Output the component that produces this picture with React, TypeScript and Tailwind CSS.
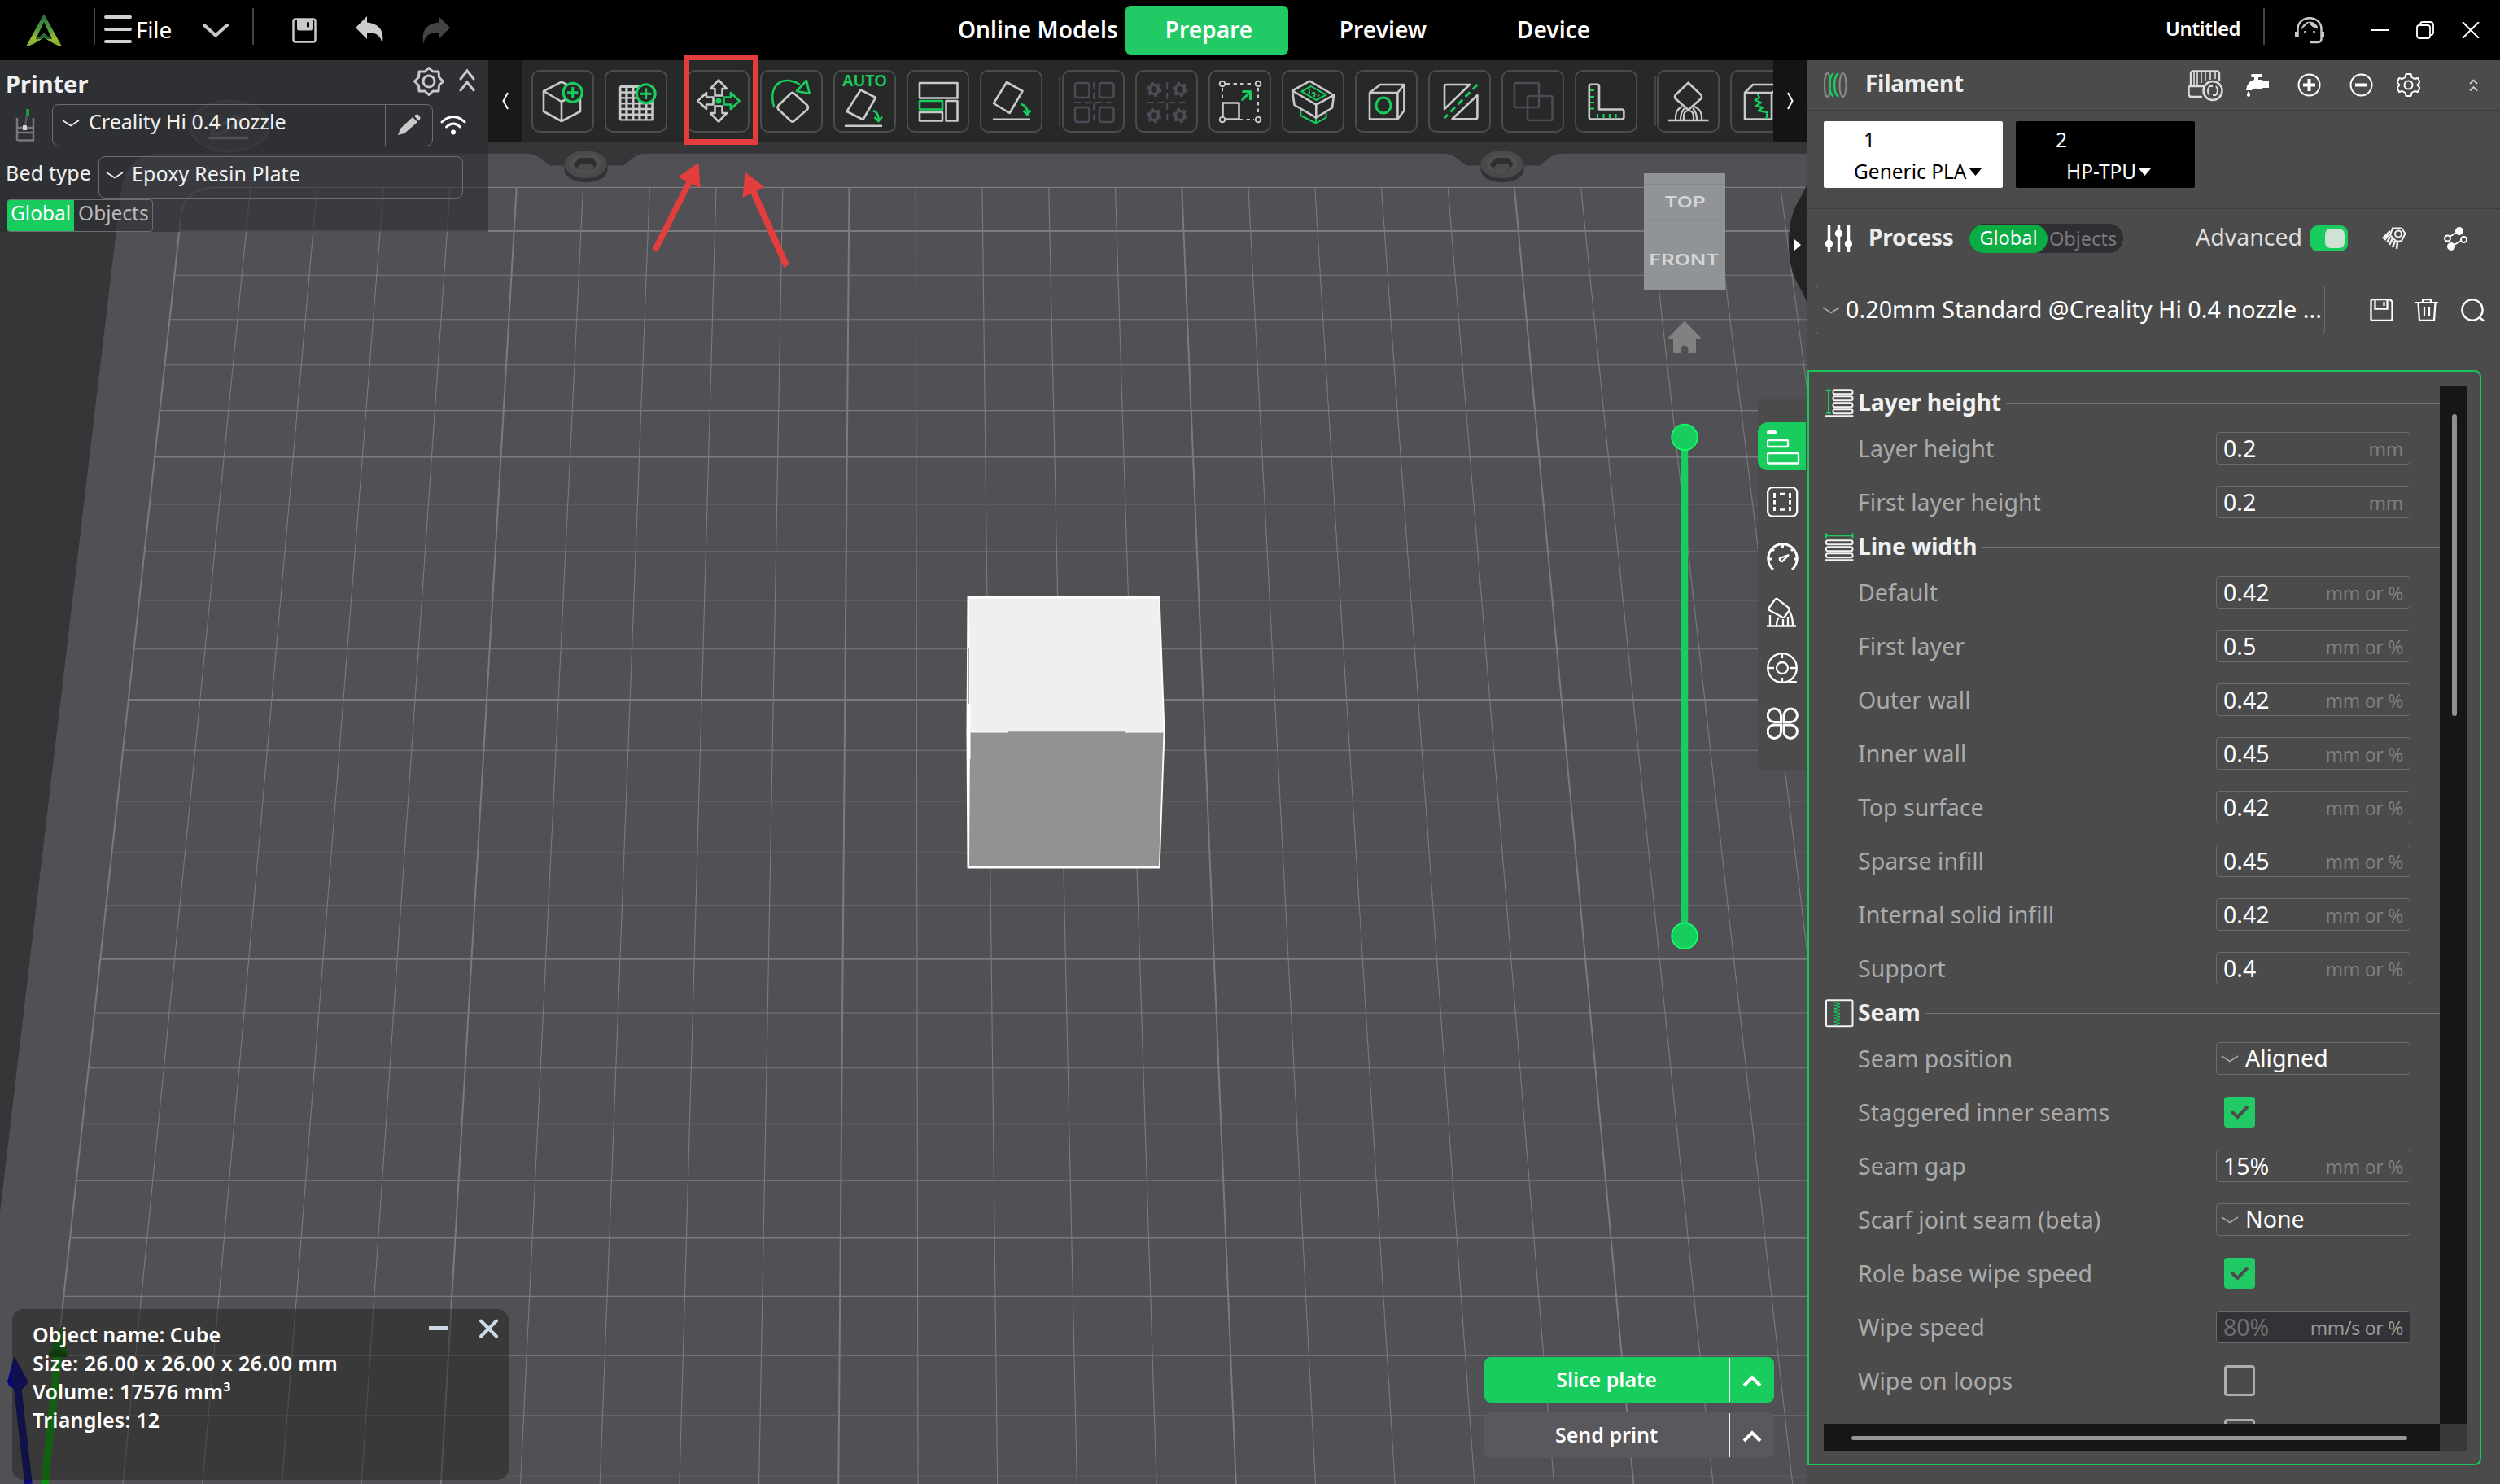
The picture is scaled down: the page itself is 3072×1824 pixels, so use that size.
import type { ReactNode } from "react";
import clsx from "clsx";

const GREEN = "#18cc5e";
const ICON = "#c9c9c9";
const DIM = "#4b4c55";

// perspective of the print bed: x of every grid column at the top and bottom edge
const BED_TOP = 230.3;
const BED_BOTTOM = 1824;
const ROWS = [
  284, 338.3, 392.8, 448.8, 504.6, 561.6, 619.6, 678, 737.6, 797.8, 860, 922.2, 984.8, 1048.3, 1113, 1178.7, 1245,
  1312.8, 1381.3, 1450.8, 1521.6, 1593.4, 1666.2, 1740.1, 1815.2,
];
const COLS = Array.from({ length: 31 }, (_, i) => i - 15);

const topX = (k: number) => 1452.2 + 81.74 * k;
const bottomX = (k: number) => 1518.8 + 97.7 * k;
const leftX = (y: number) =>
  topX(-15) + ((bottomX(-15) - topX(-15)) * (y - BED_TOP)) / (BED_BOTTOM - BED_TOP);

function Screw({ x }: { x: number }) {
  return (
    <g>
      <path d={`M${x - 73} 188 C${x - 60} 189 ${x - 56} 195 ${x - 43} 203.5 H${x + 46} C${x + 58} 195 ${x + 62} 189 ${x + 75} 188 Z`} fill="#363638" />
      <path d={`M${x - 26} 204 V209 A26 15 0 0 0 ${x + 27} 209 V204 Z`} fill="#333335" />
      <ellipse cx={x} cy="202" rx="26" ry="17" fill="#4a4a4d" />
      <ellipse cx={x} cy="201" rx="19" ry="12" fill="#505053" />
      <path d={`M${x - 15} 202 L${x - 7} 194 H${x + 9} L${x + 14} 202 L${x + 8} 210 H${x - 8} Z`} fill="#2f2f31" />
      <path d={`M${x - 10} 206 L${x - 5} 201 H${x + 7} L${x + 11} 206 L${x + 7} 210 H${x - 8} Z`} fill="#4c4c4f" />
    </g>
  );
}

function Bed() {
  return (
    <svg className="absolute inset-0" width="2220" height="1750" viewBox="0 74 2220 1750">
      <rect x="0" y="74" width="2220" height="1750" fill="#363638" />
      <path d="M0 1490 L148 240 Q154 190 192 188.7 H2220 V1824 H0 Z" fill="#515055" />
      <ellipse cx="282" cy="155" rx="48" ry="31" fill="#404043" stroke="#4c4d50" strokeWidth="3" />
      <path d="M262 160 L290 142 L298 148 L272 164 L260 165 Z" fill="none" stroke="#5a5b5f" strokeWidth="3.500" strokeLinejoin="round" />
      <path d="M258 169.500 H304" stroke="#85868a" strokeWidth="3.500" strokeLinecap="round" />
      <Screw x={719.5} />
      <Screw x={1845.5} />
      <g stroke="#7b7a7f">
        <path d={`M222 268 Q224 231 266 ${BED_TOP} H2220`} fill="none" strokeWidth="1.3" />
        {ROWS.map((y, i) => (
          <line key={y} x1={leftX(y)} x2="2220" y1={y} y2={y} strokeWidth={i % 5 === 0 ? 2 : 1.1} />
        ))}
        {COLS.map((k) => (
          <line
            key={k}
            x1={k === -15 ? leftX(268) : topX(k)}
            y1={k === -15 ? 268 : BED_TOP}
            x2={bottomX(k)}
            y2={BED_BOTTOM}
            strokeWidth={k % 5 === 0 ? 2 : 1.1}
          />
        ))}
      </g>
      <path d="M1188.500 733 H1425.500 L1431.500 900 L1425.500 1067.500 H1188.500 L1187.500 900 Z" fill="#fff" />
      <path d="M1191 735.500 H1424 L1429.500 899.500 H1192 Z" fill="#efefef" />
      <path d="M1192 900.500 L1239 900.500 V899.300 H1382 V900.500 H1429.500 L1424 1065 H1191 Z" fill="#929292" />
      <path d="M1190.500 796 V865" stroke="#a3a3a3" strokeWidth="1" />
      <path d="M1191.500 866 V933" stroke="#fff" strokeWidth="2" />
      <path d="M35 1824 L21 1700" stroke="#0a0a72" strokeWidth="9.500" />
      <path d="M17.500 1667 L34.500 1698 Q31 1708 22 1708 Q10 1706 9 1698 Z" fill="#07077a" />
      <path d="M55 1824 L71.500 1664" stroke="#0a960a" strokeWidth="9.500" />
      <path d="M75.500 1629 L83 1665 Q71 1658 60 1665 Z" fill="#0a6f0a" />
      <path d="M60 1665 Q71 1652 83 1665 L82 1668 H61 Z" fill="#064f06" />
      <path d="M2220 227 C2214 246 2198 254 2198 300 C2198 342 2214 352 2220 371 Z" fill="#232324" />
      <path d="M2205 294 L2213 301 L2205 308 Z" fill="#fff" />
    </svg>
  );
}

function Annotation() {
  return (
    <svg className="absolute left-[780px] top-[-7px]" width="220" height="270" viewBox="780 67 220 270" fill="#e33d3d">
      <rect x="843.500" y="70.500" width="85" height="104" fill="none" stroke="#e33d3d" strokeWidth="7" />
      <path d="M858.500 200 L860.500 231 L850 226 L808 309.500 L801.500 306 L843.500 222.500 L833 217.500 Z" />
      <path d="M915.500 211.500 L939.500 230 L929.500 234 L970 325 L963 329 L922.500 238 L912.500 243 Z" />
    </svg>
  );
}

function Chevron({ className }: { className?: string }) {
  return (
    <svg className={className} width="22" height="9" viewBox="0 0 22 9" fill="none" stroke="currentColor" strokeWidth="1.7">
      <path d="M1 1 L11 7.500 L21 1" />
    </svg>
  );
}

function Divider({ className }: { className?: string }) {
  return <div className={clsx("w-[2px] h-[45px] mb-[9px] bg-[#444] shrink-0", className)} />;
}

function Header() {
  return (
    <header className="flex items-center h-[74px] bg-black pl-[32px] shrink-0 text-white *:shrink-0">
      <svg width="44" height="41" viewBox="0 0 44 41">
        <defs>
          <linearGradient id="logo" x1="0" y1="0" x2="0" y2="1">
            <stop offset="0" stopColor="#1d6b3c" />
            <stop offset="0.45" stopColor="#4e9b3e" />
            <stop offset="0.75" stopColor="#9cba35" />
            <stop offset="1" stopColor="#7cae36" />
          </linearGradient>
        </defs>
        <path d="M22 0 L44 40 Q36 39 22 29 Q8 39 0 40 Z M22 10 L12 31 Q17 29 22 24 Q27 29 32 31 Z" fill="url(#logo)" fillRule="evenodd" />
        <path d="M12 31 Q18 28 22 24 Q26 28 32 31 Q26 32 22 29 Q18 32 12 31" fill="#1f7038" />
      </svg>
      <Divider className="ml-[39px]" />
      <svg className="ml-[11px] mb-[2px]" width="34" height="36" viewBox="0 0 34 36" stroke="#d2d2d2" strokeWidth="4" strokeLinecap="round">
        <path d="M2 3 H32 M2 18 H32 M2 33 H32" />
      </svg>
      <div className="ml-[5px] w-[82px] pb-[2px] text-[28px] tracking-[-0.2px]">File</div>
      <svg width="32" height="17" viewBox="0 0 32 17" fill="none" stroke={ICON} strokeWidth="4" strokeLinecap="round" strokeLinejoin="round">
        <path d="M2 2 L16 14.500 L30 2" />
      </svg>
      <Divider className="ml-[29px]" />
      <svg className="ml-[47px]" width="30" height="31" viewBox="0 0 30 31">
        <rect x="1.500" y="1.500" width="27" height="28" rx="2.500" fill="none" stroke={ICON} strokeWidth="2.500" />
        <path d="M6 1 H25 V13 Q25 15.500 22.500 15.500 H8.500 Q6 15.500 6 13 Z" fill={ICON} />
        <rect x="18" y="5" width="3" height="6.500" rx="1" fill="#000" />
      </svg>
      <svg className="ml-[48px]" width="34" height="34" viewBox="0 0 34 34" fill="#cdcdcd">
        <path d="M14 0 V7.500 C29 9 36 18 32.500 34 C31 24 26 20 14 20 V28 L0 14 Z" />
      </svg>
      <svg className="ml-[48px]" width="34" height="34" viewBox="0 0 34 34" fill="#444">
        <path d="M20 0 V7.500 C5 9 -2 18 1.500 34 C3 24 8 20 20 20 V28 L34 14 Z" />
      </svg>
      <nav className="flex items-center ml-[624px] text-[28px] font-semibold tracking-[0.050px] *:pb-[2px]">
        <div className="w-[206px] whitespace-nowrap">Online Models</div>
        <div className="flex items-center justify-center w-[200px] h-[60px] pl-[5px] rounded-[6px] bg-[#22ca65]">Prepare</div>
        <div className="w-[233px] text-center">Preview</div>
        <div className="w-[186px] text-center">Device</div>
      </nav>
      <div className="ml-[659px] w-[120px] pb-[4px] text-[24px] font-semibold tracking-[-0.400px]">Untitled</div>
      <Divider />
      <svg className="ml-[37px]" width="36" height="33" viewBox="0 0 36 33" fill="none" stroke={ICON} strokeWidth="2.500">
        <path d="M3.500 24 V15 C3.500 -3.500 32.500 -3.500 32.500 15 V27 Q32.500 31 27 31 H18" />
        <path d="M1.500 18 V25 M34.500 18 V25" strokeWidth="3" />
        <path d="M8 15 Q10 7 18 6 Q19 12 28 14 Q26 6 18 6" fill={ICON} strokeWidth="1" />
        <path d="M12.500 17 V20 M23.500 17 V20" />
      </svg>
      <svg className="ml-[57px]" width="22" height="22" viewBox="0 0 22 22" stroke="#fff" strokeWidth="2"><path d="M0 11 H22" /></svg>
      <svg className="ml-[34px]" width="22" height="22" viewBox="0 0 22 22" fill="none" stroke="#fff" strokeWidth="1.800">
        <rect x="1" y="5" width="16" height="16" rx="3" />
        <path d="M5 5 V4 Q5 1 8 1 H17 Q21 1 21 5 V14 Q21 17 17 17" />
      </svg>
      <svg className="ml-[34px]" width="22" height="20" viewBox="0 0 22 20" stroke="#fff" strokeWidth="2"><path d="M1 0 L21 20 M21 0 L1 20" /></svg>
    </header>
  );
}

function PrinterPanel() {
  return (
    <section className="w-[600px] h-[211px] shrink-0 bg-[#2c2d32]/60 text-[#f0f0f0] text-[25px]">
      <div className="flex h-[52px] pl-[7px] pr-[16px]">
        <h2 className="pt-[9px] leading-[40px] text-[29px] font-bold">Printer</h2>
        <svg className="ml-auto mt-[8px]" width="38" height="36" viewBox="0 0 38 36" fill="none" stroke={ICON} strokeWidth="3" strokeLinejoin="round">
          <path d="M19 1.500 L24 6 L31 6 L31.500 13 L36.500 18 L31.500 23 L31 30 L24 30 L19 34.500 L14 30 L7 30 L6.500 23 L1.500 18 L6.500 13 L7 6 L14 6 Z" />
          <circle cx="19" cy="18" r="7" />
        </svg>
        <svg className="ml-[18px] mt-[10px]" width="20" height="30" viewBox="0 0 20 30" fill="none" stroke={ICON} strokeWidth="3" strokeLinecap="round">
          <path d="M2 13 L10 3 L18 13 M2 27 L10 17 L18 27" />
        </svg>
      </div>
      <div className="flex items-center h-[55px] pl-[19px]">
        <svg width="26" height="42" viewBox="0 0 26 42" fill="none" stroke="#77787c" strokeWidth="2.500">
          <path d="M2 12 V40 M22 12 V40 M2 24 H22 M3 30 H21 M3 39.500 H23" />
          <rect x="9" y="21" width="5" height="6" fill="#d5d5d5" stroke="none" />
          <path d="M14 9 L12 21" stroke="#555" />
          <rect x="13" y="1" width="4" height="9" fill="#1b9a34" stroke="none" />
        </svg>
        <div className="flex ml-[19px] w-[468px] h-[52px] border border-[#6c6d71] rounded-[8px]">
          <div className="flex items-center grow border-r border-[#6c6d71] pl-[11px] pb-[8px]">
            <Chevron className="mt-[4px]" />
            <span className="ml-[11px]">Creality Hi 0.4 nozzle</span>
          </div>
          <div className="flex items-center justify-center w-[57px]">
            <svg width="28" height="27" viewBox="0 0 28 27" fill={ICON}>
              <path d="M0 26 L3 18 L18 4 L24 10 L8 24 Z M20 2.500 Q23 -1 26 2 Q29 5 26 8 L25.500 8.500 Z" />
            </svg>
          </div>
        </div>
        <svg className="ml-[9px]" width="32" height="24" viewBox="0 0 32 24" fill="none" stroke="#fff" strokeWidth="3" strokeLinecap="round">
          <path d="M2 8 Q16 -5 30 8 M7.500 14 Q16 6 24.500 14" />
          <circle cx="16" cy="20.500" r="3" fill="#fff" stroke="none" />
        </svg>
      </div>
      <div className="flex items-center h-[64px] pl-[7px]">
        <span className="w-[114px] pb-[1px] tracking-[0.2px]">Bed type</span>
        <div className="flex items-center w-[448px] h-[52px] mt-[10px] border border-[#6c6d71] rounded-[8px] pl-[8px] pb-[8px]">
          <Chevron className="mt-[2px]" />
          <span className="ml-[10px] tracking-[0.1px]">Epoxy Resin Plate</span>
        </div>
      </div>
      <div className="flex w-[180px] h-[40px] ml-[8px] border border-[#6c6d71] rounded-[4px] overflow-hidden leading-[32px] text-[24.500px]">
        <span className="w-[82px] pl-[4px] bg-[#18cc5e] text-white">Global</span>
        <span className="pl-[5px] text-[#b9b9ba]">Objects</span>
      </div>
    </section>
  );
}

function PlusBadge({ cy }: { cy: number }) {
  return (
    <g stroke={GREEN} strokeWidth="3">
      <circle cx="50.700" cy={cy} r="11.500" fill="#272928" />
      <path d={`M44 ${cy} H57.400 M50.700 ${cy - 6.7} V${cy + 6.7}`} />
    </g>
  );
}

const Gear = ({ x, y }: { x: number; y: number }) => (
  <g>
    <circle cx={x} cy={y} r="5.500" strokeWidth="3.500" />
    <circle cx={x} cy={y} r="8" strokeWidth="2.500" strokeDasharray="4 4.370" />
  </g>
);

const moveArrow = "M39 12.500 L49 23 H43.500 V31.500 H34.500 V23 H29 Z";
const cross = "M39.200 15 V65 M15 40 H64";

const toolIcons: ReactNode[] = [
  <>
    <path d="M37 14.700 L60 26 V51 L37 63 L15 51 V26 Z M15 26 L37 39 L60 26 M37 39 V63" />
    <PlusBadge cy={27.7} />
  </>,
  <>
    <rect x="17.800" y="19" width="43" height="43.500" rx="2.500" fill={ICON} stroke="none" />
    {[0, 1, 2, 3, 4].map((c) =>
      [0, 1, 2, 3, 4, 5].map((r) => (
        <rect key={`${c}-${r}`} x={20.5 + c * 8} y={22 + r * 6.8} width="4.800" height="4.300" fill="#272928" stroke="none" />
      ))
    )}
    <PlusBadge cy={29.3} />
  </>,
  <>
    <path d={moveArrow} />
    <path d={moveArrow} transform="rotate(180 39 38)" />
    <path d={moveArrow} transform="rotate(270 39 38)" />
    <path d={moveArrow} transform="rotate(90 39 38)" stroke={GREEN} />
    <circle cx="39" cy="38" r="3.500" fill={GREEN} stroke="none" />
  </>,
  <>
    <path d="M37.500 29 Q39.700 26.500 42 29 L58 43.500 Q60 46 58 48.500 L42 62.500 Q39.700 65 37.500 62.500 L22.500 48.500 Q20.500 46 22.500 43.500 Z" />
    <path d="M17.300 46 C9 18 28 5 49 18 M57 13 L60.700 29 L45 26 Z" stroke={GREEN} />
  </>,
  <>
    <path d="M33.500 24.500 L52 34 L36.500 61 L16.500 51 Z" />
    <path d="M14 68.700 H60" />
    <path d="M49 50 Q56 53 55.500 61 M50.500 58 L55.500 63 L60 57.500" stroke={GREEN} />
  </>,
  <>
    <rect x="16" y="16" width="46.500" height="18.500" />
    <rect x="16" y="52" width="28" height="10.500" />
    <rect x="48.500" y="38" width="14" height="24.500" />
    <rect x="16" y="38" width="28" height="10.500" stroke={GREEN} />
  </>,
  <>
    <path d="M33 15 L52.500 26 L36.600 53 L17 41 Z" />
    <path d="M16 60.700 H62" />
    <path d="M51 42 Q59 45 58.500 53 M53.500 50 L58.500 55 L62.500 49.500" stroke={GREEN} />
  </>,
  <g stroke={DIM}>
    <rect x="16" y="16" width="17.500" height="18" rx="3" />
    <rect x="46" y="16" width="17.500" height="18" rx="3" />
    <rect x="16" y="46" width="17.500" height="18" rx="3" />
    <rect x="46" y="46" width="17.500" height="18" rx="3" />
    <path d={cross} strokeWidth="2" strokeDasharray="8 5" />
  </g>,
  <g stroke={DIM}>
    <Gear x={23} y={24} />
    <Gear x={55} y={24} />
    <Gear x={23} y={56} />
    <Gear x={55} y={56} />
    <path d={cross} strokeWidth="2" strokeDasharray="8 5" />
  </g>,
  <>
    <path d="M22 17 H56 M61 22 V56 M17 22 V38 M38 61 H56" strokeDasharray="4.500 4" strokeWidth="2" />
    <rect x="17.500" y="40.500" width="20" height="20" />
    {[[17, 17], [61, 17], [17, 61], [61, 61]].map(([x, y]) => (
      <circle key={`${x}-${y}`} cx={x} cy={y} r="3.300" fill="#272928" strokeWidth="2" />
    ))}
    <path d="M41 37.500 L51 27 M41.500 26.500 H51.500 V37" stroke={GREEN} strokeWidth="3" />
  </>,
  <>
    <path d="M23.300 49 V56 L42 65.500 L54.500 58.500 V52 M42 59 V65" stroke={GREEN} strokeWidth="2" />
    <path d="M34.400 13.700 L13 25.500 L42.300 42.700 L64 31 Z M13 25.500 L15.500 43 L42.300 58.700 L62 46.500 L64 31 M42.300 43 V58" />
    <path d="M36 20 L24.400 26.300 L42.300 37 L54.500 30.700 Z" stroke={GREEN} strokeWidth="2" />
    <path d="M33 27 L47 32 M34 24 V29 M40 27 V33" stroke={GREEN} strokeWidth="2" strokeDasharray="2 2" />
  </>,
  <>
    <path d="M18 28 H52.400 V60.500 H18 Z M18 28 L31 18 H60.400 L52.400 28 M60.400 18 V50 L52.400 60.500" />
    <ellipse cx="35" cy="43.500" rx="9" ry="9.500" stroke={GREEN} strokeWidth="3" />
  </>,
  <>
    <path d="M20 20 Q20 18 22 18 H51 L20 48 Z M60.400 31 V58 Q60.400 60.300 58 60.300 H29.600 Z" />
    <path d="M60.400 18 L20 59" stroke={GREEN} strokeDasharray="8 5" strokeWidth="3" />
  </>,
  <g stroke={DIM}>
    <rect x="16" y="16" width="30" height="30" rx="1.500" />
    <rect x="32" y="32" width="30.500" height="30" rx="1.500" />
  </g>,
  <>
    <path d="M17.800 20 Q17.800 17.800 20 17.800 H28 Q30 17.800 30 20 V48.500 H58 Q60.400 48.500 60.400 51 V58 Q60.400 60.500 58 60.500 H20 Q17.800 60.500 17.800 58 Z" />
    <path d="M19 25 H24 M19 33 H24 M19 40 H24 M19 47.500 H24 M28 54 V59 M35.500 54 V59 M43 54 V59 M50.500 54 V59" stroke={GREEN} strokeWidth="2.200" />
  </>,
  <>
    <path d="M38.600 15.700 L54.500 31 Q55.500 33 54.500 35 L38.600 49 L22.500 35 Q21.500 33 22.500 31 Z M14 62 H63.500" />
    <path d="M23 61 Q22 49 31 45 M55 61 Q56 49 46 45 M29 61 Q29 52 34 47 M49 61 Q49 52 44 47 M33 61 Q32 50 39 50 Q46 50 45 61" strokeWidth="2.200" />
  </>,
  <>
    <path d="M18 28 H51 V60.500 H18 Z M18 28 L28 18 H62 L52 28" />
    <path d="M34 30 L36 34 L30.500 37 L38 40 L32 44 L40 46 L35 50 L45.500 52 L44.500 60" stroke={GREEN} strokeWidth="2.300" />
  </>,
];

function ToolButton({ index }: { index: number }) {
  return (
    <div className="relative w-[77px] h-[77px] shrink-0 border-2 border-[#4a4c4b] rounded-[10px]">
      {index === 4 && (
        <span className="absolute inset-x-0 top-0 text-center leading-[22px] text-[20px] font-semibold text-[#18cc5e]">AUTO</span>
      )}
      <svg className="-m-[2px]" width="77" height="77" viewBox="0 0 77 77" fill="none" stroke={ICON} strokeWidth="2.600" strokeLinejoin="round">
        {toolIcons[index]}
      </svg>
    </div>
  );
}

function ToolGroup({ from, to }: { from: number; to: number }) {
  return (
    <div className="flex gap-[13px]">
      {toolIcons.slice(from, to).map((_, i) => (
        <ToolButton key={i} index={from + i} />
      ))}
    </div>
  );
}

function Toolbar() {
  return (
    <div className="flex items-center w-[1620px] h-[100px] bg-[#272928] overflow-hidden">
      <div className="flex items-center justify-center w-[42px] h-full shrink-0 bg-[#191919]">
        <svg width="8" height="22" viewBox="0 0 8 22" fill="none" stroke="#fff" strokeWidth="2"><path d="M7 1 L1.500 11 L7 21" /></svg>
      </div>
      <div className="flex items-center w-[1537px] pl-[11px] overflow-hidden">
        <ToolGroup from={0} to={2} />
        <div className="w-[24px] shrink-0" />
        <ToolGroup from={2} to={7} />
        <div className="w-[2px] h-[62px] ml-[20px] mr-[2px] shrink-0 bg-[#424443]" />
        <ToolGroup from={7} to={15} />
        <div className="w-[2px] h-[62px] ml-[21px] mr-[1px] shrink-0 bg-[#424443]" />
        <ToolGroup from={15} to={17} />
      </div>
      <div className="flex items-center justify-center w-[41px] h-full shrink-0 bg-[#141414]">
        <svg width="8" height="22" viewBox="0 0 8 22" fill="none" stroke="#fff" strokeWidth="2"><path d="M1 1 L6.500 11 L1 21" /></svg>
      </div>
    </div>
  );
}

function ViewCube() {
  return (
    <div className="absolute left-[2020px] top-[139px] flex flex-col w-[100px] h-[143px] bg-[#909497] text-[#d3d5d8] text-center font-[Inter] text-[19px] font-semibold *:shrink-0">
      <div className="h-[14px] border-b border-[#84888b]" />
      <div className="h-[43px] leading-[44px] border-b border-[#878b8e]"><span className="inline-block scale-x-[1.3]">TOP</span></div>
      <div className="leading-[99px]"><span className="inline-block scale-x-[1.32]">FRONT</span></div>
    </div>
  );
}

function HeightSlider() {
  return (
    <svg className="absolute left-[2048px] top-[318px]" width="44" height="780" viewBox="2048 392 44 780">
      <path d="M2070 394.500 L2090 415 V417 H2084 V434 H2074.500 V430 Q2074 424.500 2070 424.500 Q2066 424.500 2065.500 430 V434 H2056 V417 H2050 V415 Z" fill="#818182" />
      <path d="M2070 537 V1150" stroke={GREEN} strokeWidth="8.500" />
      <circle cx="2070" cy="537.500" r="15.800" fill={GREEN} stroke="#0cff68" strokeWidth="1.800" />
      <circle cx="2070" cy="1150.500" r="15.800" fill={GREEN} stroke="#0cff68" strokeWidth="1.800" />
    </svg>
  );
}

const categoryIcons: ReactNode[] = [
  <>
    <rect x="0" y="2" width="12" height="5" rx="2.500" fill="#fff" stroke="none" />
    <rect x="1" y="14" width="25" height="8" rx="1.500" />
    <rect x="1" y="30" width="38" height="12.500" rx="1.500" />
  </>,
  <>
    <rect x="1.200" y="4.200" width="36" height="35.500" rx="6" />
    <path d="M9.500 11 V33 M28.500 11 V33" strokeDasharray="6 2.500" strokeWidth="3" />
    <path d="M16 12 H22 M16 31.500 H22" />
  </>,
  <>
    <path d="M8 37 A17.700 17.700 0 1 1 31 37 M19.500 7 V11 M2 24 H6 M33 24 H37 M7 12 L9 14 M32 12 L30 14" strokeWidth="3" />
    <path d="M27 19 L16 23 Q15 27 19 27 Z" />
  </>,
  <>
    <path d="M2 17 L10 6 Q12 4 14 6 L27 16 Q29 18 27 20 L22 27 Q20 29 18 27 L3 19 Z" />
    <path d="M0 38.500 H36 M4 38 V25 M12 38 Q12 31 15 28 M20 38 V30 M26 38 V27 M32 38 Q32 27 28 21" />
  </>,
  <>
    <circle cx="19" cy="22" r="17.800" />
    <circle cx="19" cy="22" r="7" />
    <path d="M19 4 V10 M19 34 V39 M1 22 H9 M29 22 H37 M27 39 L37 39.500" />
  </>,
  <>
    <path d="M17.500 20.500 V12 A8.200 8.200 0 1 0 9 20.500 Z M21 20.500 V12 A8.200 8.200 0 1 1 29.500 20.500 Z M17.500 24 V32 A8.200 8.200 0 1 1 9 24 Z M21 24 V32 A8.200 8.200 0 1 0 29.500 24 Z" strokeWidth="3" />
  </>,
];

function CategoryBar() {
  return (
    <div className="absolute left-[2160px] top-[417px] w-[60px] h-[456px] pt-[28px] bg-[#4b4c49] flex flex-col gap-[9px]">
      {categoryIcons.map((icon, i) => (
        <div key={i} className={clsx("flex items-center h-[59px] pl-[11px] mr-px", i === 0 && "bg-[#18cc5e] rounded-l-[12px]")}>
          <svg width="42" height="44" viewBox="0 0 42 44" fill="none" stroke="#fff" strokeWidth="2.300">{icon}</svg>
        </div>
      ))}
    </div>
  );
}

function ObjectInfo() {
  return (
    <div className="absolute left-[15px] top-[1535px] w-[610px] h-[210px] pl-[25px] pt-[14px] rounded-[14px] bg-[#1c1c19]/45 text-[25px] font-semibold leading-[35px] text-white">
      <p>Object name: Cube</p>
      <p className="tracking-[0.450px]">Size: 26.00 x 26.00 x 26.00 mm</p>
      <p className="tracking-[0.150px]">Volume: 17576 mm³</p>
      <p className="tracking-[0.250px]">Triangles: 12</p>
      <svg className="absolute left-[511px] top-[12px]" width="88" height="24" viewBox="0 0 88 24" stroke="#cdd8ea" fill="none">
        <path d="M1 11.500 H24" strokeWidth="5" />
        <path d="M65 2.500 L84 21.500 M84 2.500 L65 21.500" strokeWidth="4" strokeLinecap="round" />
      </svg>
    </div>
  );
}

function SliceButton({ label, className }: { label: string; className: string }) {
  return (
    <div className={clsx("flex h-[56px] rounded-[8px] text-white text-[25px] font-semibold", className)}>
      <div className="w-[300px] text-center leading-[54px]">{label}</div>
      <div className="w-[1.500px] my-[1px] bg-white/90" />
      <div className="flex items-center justify-center grow">
        <svg className="mt-[2px]" width="24" height="16" viewBox="0 0 24 16" fill="none" stroke="#fff" strokeWidth="4"><path d="M2 14 L12 4 L22 14" /></svg>
      </div>
    </div>
  );
}

function Viewport() {
  return (
    <main className="relative w-[2220px] shrink-0">
      <Bed />
      <div className="relative flex items-start">
        <PrinterPanel />
        <Toolbar />
      </div>
      <Annotation />
      <ViewCube />
      <HeightSlider />
      <CategoryBar />
      <ObjectInfo />
      <div className="absolute left-[1824px] top-[1594px] w-[356px] flex flex-col gap-[12px]">
        <SliceButton label="Slice plate" className="bg-[#18cc5e]" />
        <SliceButton label="Send print" className="bg-[#59585d]" />
      </div>
    </main>
  );
}

function FilamentHeader() {
  return (
    <div className="flex items-center h-[62px] pl-[20px] border-b border-[#3c3c3d] *:shrink-0">
      <svg width="29" height="31" viewBox="0 0 29 31" fill="none" strokeWidth="2">
        <ellipse cx="4.500" cy="15.500" rx="3.500" ry="14.500" stroke="#8b8b8c" />
        <path d="M12 1 Q7 5 7 15.500 Q7 26 12 30 M18 1 Q13 5 13 15.500 Q13 26 18 30" stroke={GREEN} strokeWidth="2.500" />
        <ellipse cx="23.500" cy="15.500" rx="4" ry="14.500" stroke="#8b8b8c" />
      </svg>
      <h2 className="ml-[22px] w-[396px] pb-[5px] text-[28px] font-bold tracking-[-0.3px] text-[#ececec]">Filament</h2>
      <svg className="mt-[2px]" width="44" height="39" viewBox="0 0 44 39" fill="none" stroke="#dcdcdc" strokeWidth="2.500">
        <path d="M4 19 V5 Q4 1.500 7 1.500 H36 Q39 1.500 39 5 V14 M1.500 20 H20 M1.500 20 V29 Q1.500 33 5 33 H18 M4 20 V5" />
        <path d="M8 3 V18 M12 3 V18 M17 3 V16 M22 3 V14 M28 3 V12 M34 3 V11" strokeWidth="1.600" />
        <circle cx="31" cy="25.500" r="11.500" fill="#4b4b4c" />
        <path d="M27 31 Q23 26 27 20 M35 20 Q39 25 35 31 M27 20 H31 M35 31 H31" strokeWidth="2" />
      </svg>
      <svg className="ml-[27px]" width="29" height="28" viewBox="0 0 29 28" fill="#fff">
        <path d="M8 0 H20 Q22 2 20 4 H16 V7 H20 L22 8 H29 V17 H22 Q20 19 16 18 Q9 17 8 20 H1 Q2 9 11 7 V4 H8 Q6 2 8 0 Z M4 21 Q8 27 4 28 Q0 27 4 21" />
      </svg>
      <svg className="ml-[35px]" width="29" height="29" viewBox="0 0 29 29" fill="none" stroke="#fff">
        <circle cx="14.500" cy="14.500" r="13" strokeWidth="2" />
        <path d="M7 14.500 H22 M14.500 7 V22" strokeWidth="4" />
      </svg>
      <svg className="ml-[35px]" width="29" height="29" viewBox="0 0 29 29" fill="none" stroke="#fff">
        <circle cx="14.500" cy="14.500" r="13" strokeWidth="2" />
        <path d="M7 14.500 H22" strokeWidth="4" />
      </svg>
      <svg className="ml-[29px]" width="29" height="29" viewBox="0 0 29 29" fill="none" stroke="#fff" strokeWidth="2" strokeLinejoin="round">
        <path d="M11.500 1 H17.500 L18.500 5 L22 7 L26 6 L28.500 11 L25.500 14.500 L28.500 18 L26 23 L22 22 L18.500 24 L17.500 28 H11.500 L10.500 24 L7 22 L3 23 L0.800 18 L3.500 14.500 L0.800 11 L3 6 L7 7 L10.500 5 Z" />
        <circle cx="14.500" cy="14.500" r="5" />
      </svg>
      <svg className="ml-[60px]" width="11" height="16" viewBox="0 0 11 16" fill="none" stroke="#d0d0d0" strokeWidth="1.800"><path d="M1 6 L5.500 1.500 L10 6 M1 14.500 L5.500 10 L10 14.500" /></svg>
    </div>
  );
}

function FilamentCard({ slot, name, className, inset }: { slot: number; name: string; className: string; inset: string }) {
  return (
    <div className={clsx("w-[220px] h-[82px] pt-[7px] rounded-[2px] text-[24.500px] leading-[31px]", className)}>
      <div className="pl-[49px]">{slot}</div>
      <div className={clsx("flex items-center mt-[8px]", inset)}>
        {name}
        <svg className="ml-[3px] mt-[2px]" width="15" height="9" viewBox="0 0 15 9" fill="currentColor"><path d="M0 0 H15 L7.500 9 Z" /></svg>
      </div>
    </div>
  );
}

function ProcessHeader() {
  return (
    <div className="flex items-center h-[73px] pl-[22px] border-b border-[#3c3c3d] *:shrink-0">
      <svg width="33" height="33" viewBox="0 0 33 33" stroke="#fff" strokeWidth="3.500" fill="#fff">
        <path d="M4.500 0 V33 M16.500 0 V33 M28.500 0 V33" />
        <circle cx="4.500" cy="22.500" r="3" /><circle cx="16.500" cy="10" r="3" /><circle cx="28.500" cy="22.500" r="3" />
      </svg>
      <h2 className="ml-[20px] w-[124px] pb-[4px] text-[28px] font-bold tracking-[-0.2px] text-[#ececec]">Process</h2>
      <div className="flex items-center w-[189px] h-[36px] rounded-full bg-[#2e2e33] text-[23.500px] leading-[33px]">
        <span className="w-[96px] h-[35px] text-center rounded-full bg-[#0aad44] text-white">Global</span>
        <span className="pl-[2px] text-[#7a7a7c]">Objects</span>
      </div>
      <span className="ml-[89px] w-[141px] pb-[3px] text-[28.500px] text-[#dedede]">Advanced</span>
      <div className="flex items-center justify-end w-[46px] h-[32px] pr-[4px] rounded-[9px] bg-[#18cc5e]">
        <div className="w-[24px] h-[24px] rounded-[7px] bg-[#d0e2d6]" />
      </div>
      <svg className="ml-[42px]" width="30" height="28" viewBox="0 0 30 28" fill="none" stroke="#f2f2f2" strokeWidth="2">
        <path d="M13 1.500 H24 L28.500 8 L24 17 L18 18 L10 10 Z" />
        <circle cx="20" cy="8.500" r="4" />
        <path d="M10 5 L1 14 M8 10 L3 16 M10 12 L6 19 M13 14 L9 22 M16 17 L13 25 M19 19 L18 27" strokeWidth="2.500" />
      </svg>
      <svg className="ml-[46px]" width="30" height="29" viewBox="0 0 30 29" stroke="#fff" strokeWidth="2">
        <path d="M5 13 L19 5 M9 24 L25 15" />
        <circle cx="19" cy="5" r="4" fill="#fff" />
        <circle cx="4.500" cy="14" r="3.500" fill="#4b4b4c" />
        <circle cx="24.500" cy="15.500" r="3.500" fill="#4b4b4c" />
        <circle cx="9" cy="24" r="4" fill="#fff" />
      </svg>
    </div>
  );
}

function PresetBar() {
  return (
    <div className="flex h-[125px] pl-[10px] pt-[21px] *:shrink-0">
      <div className="flex items-center w-[626px] h-[60px] pl-[7px] border border-[#6b6b6d] rounded-[4px]">
        <Chevron className="text-[#a5a5a6]" />
        <span className="ml-[7px] pb-[2px] whitespace-nowrap text-[28.700px] tracking-[0.050px] text-white">0.20mm Standard @Creality Hi 0.4 nozzle ...</span>
      </div>
      <svg className="ml-[55px] mt-[16px]" width="29" height="28" viewBox="0 0 29 28" fill="none" stroke="#fff" strokeWidth="2.300">
        <path d="M3 1.200 H25 L27.500 4 V25 Q27.500 26.800 25.500 26.800 H3.500 Q1.500 26.800 1.500 25 V3 Q1.500 1.200 3.500 1.200 M6.500 2 V12.500 H21.500 V2 M17.500 4 V9" />
      </svg>
      <svg className="ml-[27px] mt-[16px]" width="28" height="28" viewBox="0 0 28 28" fill="none" stroke="#fff" strokeWidth="2.200">
        <path d="M0 5 H28 M9 4 V1.200 H19 V4 M3.500 5 L5 26.800 H23 L24.500 5 M11 10 V22 M17 10 V22" />
      </svg>
      <svg className="ml-[28px] mt-[16px]" width="30" height="29" viewBox="0 0 30 29" fill="none" stroke="#fff" strokeWidth="2.400">
        <circle cx="14" cy="14" r="12.600" />
        <path d="M22 22.500 L28 27.500" />
      </svg>
    </div>
  );
}

type Setting = { label: string; value?: string; unit?: string; select?: string; checked?: boolean; disabled?: boolean };

const lineWidths: [string, string][] = [
  ["Default", "0.42"],
  ["First layer", "0.5"],
  ["Outer wall", "0.42"],
  ["Inner wall", "0.45"],
  ["Top surface", "0.42"],
  ["Sparse infill", "0.45"],
  ["Internal solid infill", "0.42"],
  ["Support", "0.4"],
];

const sections: { title: string; icon: ReactNode; settings: Setting[] }[] = [
  {
    title: "Layer height",
    icon: (
      <>
        <path d="M1 1.500 H7 M4 1 V29 M1 29.500 H7" stroke={GREEN} />
        <rect x="9.500" y="1" width="24" height="5" rx="2" /><rect x="9.500" y="9" width="24" height="5" rx="2" />
        <rect x="9.500" y="17" width="24" height="5" rx="2" /><rect x="9.500" y="25" width="24" height="5" rx="2" />
        <path d="M0 33 H34.500" />
      </>
    ),
    settings: [
      { label: "Layer height", value: "0.2", unit: "mm" },
      { label: "First layer height", value: "0.2", unit: "mm" },
    ],
  },
  {
    title: "Line width",
    icon: (
      <>
        <path d="M1 0 V6 M1 3 H33.500 M33.500 0 V6" stroke={GREEN} />
        <rect x="1" y="9" width="32.500" height="5" rx="2" /><rect x="1" y="17" width="32.500" height="5" rx="2" />
        <rect x="1" y="25" width="32.500" height="5" rx="2" />
        <path d="M0 33 H34.500" />
      </>
    ),
    settings: lineWidths.map(([label, value]) => ({ label, value, unit: "mm or %" })),
  },
  {
    title: "Seam",
    icon: (
      <>
        <rect x="1" y="1" width="32.500" height="32" rx="1.500" />
        <path d="M12.500 2.500 V32" stroke={GREEN} strokeWidth="3.500" strokeDasharray="2 2" />
        <path d="M16 4.500 V32" stroke={GREEN} strokeWidth="3.500" strokeDasharray="2 2" />
      </>
    ),
    settings: [
      { label: "Seam position", select: "Aligned" },
      { label: "Staggered inner seams", checked: true },
      { label: "Seam gap", value: "15%", unit: "mm or %" },
      { label: "Scarf joint seam (beta)", select: "None" },
      { label: "Role base wipe speed", checked: true },
      { label: "Wipe speed", value: "80%", unit: "mm/s or %", disabled: true },
      { label: "Wipe on loops", checked: false },
      { label: "", checked: false },
    ],
  },
];

function Field({ s }: { s: Setting }) {
  if (s.checked !== undefined) {
    return s.checked ? (
      <div className="flex items-center justify-center ml-[10px] w-[38px] h-[38px] rounded-[4px] bg-[#22ca65]">
        <svg width="24" height="18" viewBox="0 0 24 18" fill="none" stroke="#4b4b4c" strokeWidth="4"><path d="M2 8 L9.500 15 L22 2" /></svg>
      </div>
    ) : (
      <div className="ml-[10px] w-[38px] h-[38px] rounded-[4px] border-[3.500px] border-[#aeaeaf]" />
    );
  }
  return (
    <div className={clsx("flex items-center w-[239px] h-[40px] border border-[#6b6b6d] rounded-[4px]", s.disabled && "bg-[#333337]")}>
      {s.select ? (
        <>
          <Chevron className="ml-[5px] text-[#a5a5a6]" />
          <span className="ml-[8px] pb-[2px] text-white">{s.select}</span>
        </>
      ) : (
        <>
          <span className={clsx("pl-[8px]", s.disabled ? "text-[#6f6f71]" : "text-white")}>{s.value}</span>
          <span className={clsx("ml-auto pr-[8px] pt-[2px] text-[23px] tracking-[-0.3px]", s.disabled ? "text-[#9a9a9b]" : "text-[#7f7f80]")}>{s.unit}</span>
        </>
      )}
    </div>
  );
}

function Settings() {
  return (
    <div className="w-[757px] h-[1275px] overflow-hidden text-[28.500px]">
      <div className="-mt-[2px]">
        {sections.map((section) => (
          <div key={section.title}>
            <div className="flex items-center h-[45px] pl-[2px]">
              <svg width="35" height="35" viewBox="0 0 35 34.500" fill="none" stroke="#f2f2f2" strokeWidth="2">{section.icon}</svg>
              <h3 className="ml-[5px] pb-[2px] text-[28.500px] font-bold tracking-[-0.3px] text-[#f0f0f0]">{section.title}</h3>
              <div className="grow h-px ml-[6px] bg-[#757577]" />
            </div>
            {section.settings.map((s) => (
              <div key={s.label} className="flex items-center h-[66px]">
                <span className="w-[482px] pl-[42px] text-[#aaaaab]">{s.label}</span>
                <Field s={s} />
              </div>
            ))}
          </div>
        ))}
      </div>
    </div>
  );
}

function SidePanel() {
  return (
    <aside className="w-[852px] shrink-0 border-l border-[#262b2d] bg-[#4b4b4c]">
      <FilamentHeader />
      <div className="flex gap-[16px] h-[121px] pl-[20px] pt-[13px] border-b border-[#3c3c3d]">
        <FilamentCard slot={1} name="Generic PLA" className="bg-white text-black" inset="pl-[37px]" />
        <FilamentCard slot={2} name="HP-TPU" className="bg-black text-white" inset="pl-[62px]" />
      </div>
      <ProcessHeader />
      <PresetBar />
      <div className="w-[828px] h-[1346px] pl-[18px] pt-[18px] border-2 border-[#18c55c] rounded-r-[8px]">
        <div className="flex">
          <Settings />
          <div className="w-[34px] h-[1275px] pt-[34px] pl-[15px] bg-[#161616]">
            <div className="w-[6px] h-[371px] rounded-full bg-[#8f8f8f]" />
          </div>
        </div>
        <div className="flex">
          <div className="w-[757px] h-[34px] pt-[15px] pl-[34px] bg-[#161616]">
            <div className="w-[683px] h-[5px] rounded-full bg-[#979797]" />
          </div>
          <div className="w-[34px] h-[34px] bg-[#393939]" />
        </div>
      </div>
    </aside>
  );
}

export default function App() {
  return (
    <div className="flex flex-col w-[3072px] h-[1824px] overflow-hidden bg-[#4b4b4c] font-['Noto_Sans',sans-serif]">
      <Header />
      <div className="flex grow min-h-0">
        <Viewport />
        <SidePanel />
      </div>
    </div>
  );
}
